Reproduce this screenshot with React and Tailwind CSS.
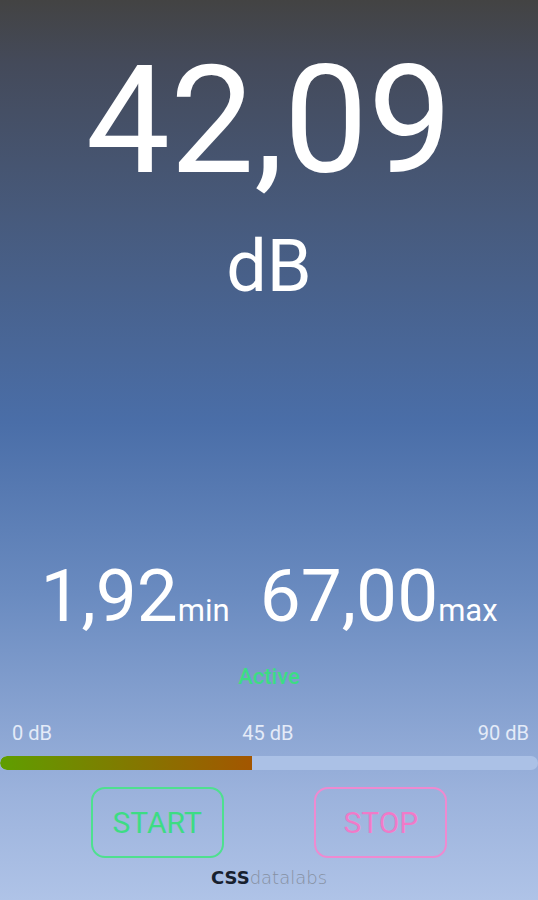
import React from "react";

const font = { fontFamily: "Roboto, 'Liberation Sans', sans-serif" };

function Reading({ value, unit }) {
  return (
    <div className="flex items-baseline">
      <span className="text-[73px] leading-none text-white">{value}</span>
      <span className="text-[31px] leading-none text-white">{unit}</span>
    </div>
  );
}

function OutlineButton({ label, tone }) {
  const styles =
    tone === "green"
      ? "border-[#4ee08f] text-[#3ddc84]"
      : "border-[#ee8ad0] text-[#f07ac8]";
  return (
    <button
      className={`w-[133px] h-[71px] rounded-[14px] border-2 bg-transparent text-[30px] ${styles}`}
      style={font}
    >
      {label}
    </button>
  );
}

export default function App() {
  const level = 42.09;
  const pct = (level / 90) * 100;

  return (
    <div
      className="w-[538px] h-[900px] flex flex-col items-center overflow-hidden bg-[linear-gradient(to_bottom,#434343_0%,#444a5a_7%,#475a7c_24%,#4a6ea8_47%,#6a8bc0_66%,#9bb2dc_88%,#afc3e7_100%)]"
      style={font}
    >
      <div className="mt-[46px] text-[150px] leading-none text-white">42,09</div>
      <div className="mt-[35px] text-[72px] leading-none text-white">dB</div>

      <div className="mt-[257px] flex items-baseline gap-[30px]">
        <Reading value="1,92" unit="min" />
        <Reading value="67,00" unit="max" />
      </div>

      <div className="mt-[33px] text-[22px] font-medium leading-none text-[#3ddc84]">Active</div>

      <div className="mt-[35px] w-full pl-[12px] pr-[9px] flex justify-between text-[20px] leading-none text-[#e4ebf8]">
        <span>0 dB</span>
        <span className="pl-[6px]">45 dB</span>
        <span>90 dB</span>
      </div>

      <div className="mt-[13px] w-full h-[14px] rounded-full bg-[#abc1e6] overflow-hidden">
        <div
          className="h-full rounded-l-full bg-[linear-gradient(to_right,#5f9e00,#a35600)]"
          style={{ width: `${pct}%` }}
        />
      </div>

      <div className="mt-[17px] w-full flex justify-evenly">
        <OutlineButton label="START" tone="green" />
        <OutlineButton label="STOP" tone="pink" />
      </div>

      <div className="mt-[11px] flex items-baseline text-[18px] leading-none" style={{ fontFamily: "'DejaVu Sans', sans-serif" }}>
        <span className="font-bold text-[#17202e]">CSS</span>
        <span className="text-[#8690a2]" style={{ fontWeight: 200 }}>
          datalabs
        </span>
      </div>
    </div>
  );
}
